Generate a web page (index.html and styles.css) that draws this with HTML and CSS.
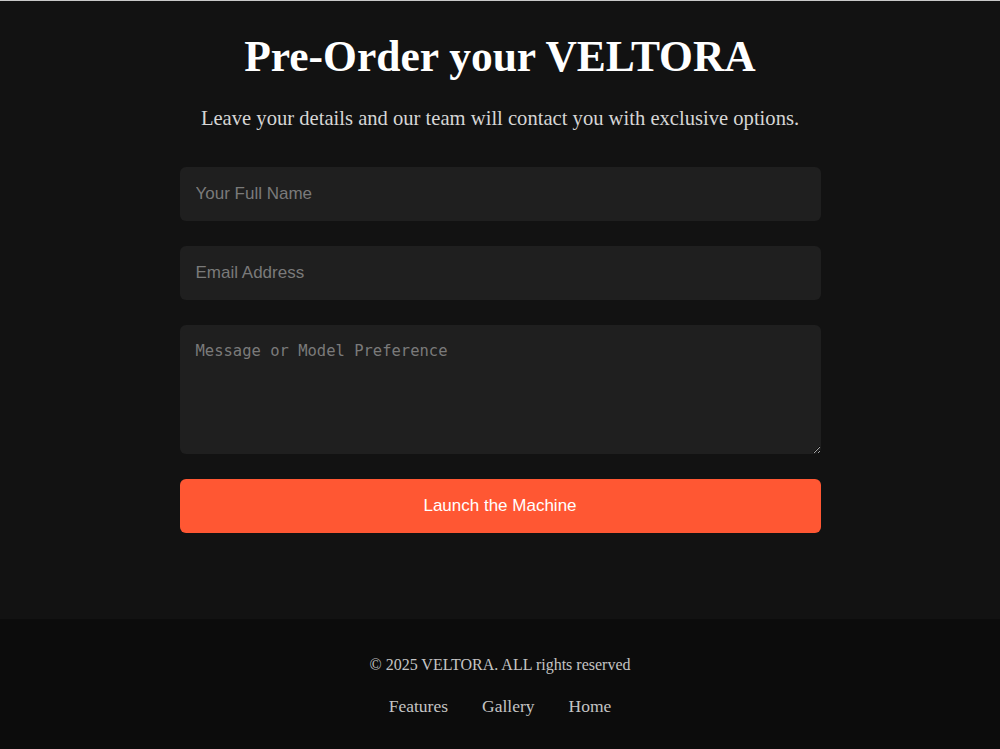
FILE: index.html
```html
<!DOCTYPE html>
<html lang="en">
<head>
<meta charset="utf-8">
<title>Pre-Order your VELTORA</title>
<link rel="stylesheet" href="styles.css">
</head>
<body>
<main class="preorder">
  <h1 class="preorder-title">Pre-Order your VELTORA</h1>
  <p class="preorder-sub">Leave your details and our team will contact you with exclusive options.</p>
  <form class="preorder-form">
    <input class="field" type="text" placeholder="Your Full Name">
    <input class="field" type="email" placeholder="Email Address">
    <textarea class="field field-area" placeholder="Message or Model Preference"></textarea>
    <button class="launch" type="button">Launch the Machine</button>
  </form>
</main>
<footer class="site-footer">
  <p class="copy">© 2025 VELTORA. ALL rights reserved</p>
  <nav class="footer-nav">
    <a href="#">Features</a>
    <a href="#">Gallery</a>
    <a href="#">Home</a>
  </nav>
</footer>
</body>
</html>
```
FILE: styles.css
```css
* { box-sizing: border-box; }
html, body { margin: 0; padding: 0; }
body {
  background: #121212;
  color: #fff;
  font-family: "Liberation Serif", "DejaVu Serif", serif;
  border-top: 1px solid #c8c8c8;
  min-height: 749px;
  display: flex;
  flex-direction: column;
}
.preorder {
  flex: 1;
  padding: 28px 0 0;
  display: flex;
  flex-direction: column;
  align-items: center;
}
.preorder-title {
  margin: 0;
  font-size: 43.5px;
  line-height: 54px;
  font-weight: 700;
  color: #fff;
}
.preorder-sub {
  margin: 22px 0 0;
  font-size: 20.6px;
  line-height: 26px;
  color: #d6d6d6;
}
.preorder-form {
  width: 641px;
  margin-top: 36px;
  display: flex;
  flex-direction: column;
  gap: 25px;
}
.field {
  display: block;
  width: 100%;
  height: 54px;
  border: none;
  border-radius: 6px;
  background: #1f1f1f;
  color: #ddd;
  font-family: "Liberation Sans", Arial, sans-serif;
  font-size: 17px;
  line-height: 19px;
  padding: 0 16px;
  outline: none;
}
.field::placeholder { color: #7a7a7a; }
.field-area {
  height: 129px;
  padding: 17px 16px;
  resize: vertical;
  font-family: "DejaVu Sans Mono", monospace;
  font-size: 15.5px;
}
.launch {
  height: 54px;
  border: none;
  border-radius: 6px;
  background: #ff5733;
  color: #fff;
  font-family: "Liberation Sans", Arial, sans-serif;
  font-size: 17px;
}
.site-footer {
  background: #0c0c0c;
  height: 130px;
  padding-top: 36px;
  text-align: center;
  color: #c4c4c4;
}
.copy {
  margin: 0;
  font-size: 16px;
  line-height: 20px;
}
.footer-nav {
  margin-top: 21px;
  display: flex;
  justify-content: center;
  gap: 34px;
}
.footer-nav a {
  color: #c4c4c4;
  text-decoration: none;
  font-size: 17.5px;
  line-height: 20px;
}
```
